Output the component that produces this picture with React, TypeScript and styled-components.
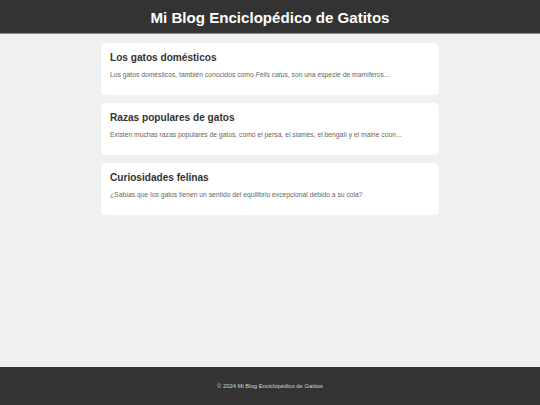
import React from 'react';
import styled, { createGlobalStyle } from 'styled-components';

const GlobalStyle = createGlobalStyle`
  html, body {
    margin: 0;
    padding: 0;
    background: #f0f0f0;
    font-family: "Liberation Sans", Arial, sans-serif;
  }
`;

const Page = styled.div`
  min-height: 100vh;
  display: flex;
  flex-direction: column;
`;

const Header = styled.header`
  background: #333333;
  height: 33px;
  border-bottom: 1px solid #8a8a8a;
  display: flex;
  align-items: center;
  justify-content: center;
`;

const Title = styled.h1`
  margin: 0;
  padding-top: 1px;
  color: #ffffff;
  font-size: 15.1px;
  font-weight: bold;
`;

const Main = styled.main`
  flex: 1;
  width: 338px;
  margin: 0 auto;
  padding-top: 9px;
  display: flex;
  flex-direction: column;
  gap: 8px;
`;

const Card = styled.article`
  background: #ffffff;
  border-radius: 5px;
  height: 52px;
  box-sizing: border-box;
  padding: 9px 9px 0;
`;

const CardTitle = styled.h2`
  margin: 0;
  font-size: 10.1px;
  line-height: 12px;
  color: #333333;
  font-weight: bold;
`;

const CardText = styled.p`
  margin: 6px 0 0;
  font-size: 6.75px;
  line-height: 10px;
  color: #666666;
`;

const Footer = styled.footer`
  background: #333333;
  height: 38px;
  display: flex;
  align-items: center;
  justify-content: center;
  color: #d8d8d8;
  font-size: 5.85px;
`;

const posts = [
  {
    title: 'Los gatos domésticos',
    text: (
      <>
        Los gatos domésticos, también conocidos como <em>Felis catus</em>, son una especie de mamíferos...
      </>
    ),
  },
  {
    title: 'Razas populares de gatos',
    text: <>Existen muchas razas populares de gatos, como el persa, el siamés, el bengalí y el maine coon...</>,
  },
  {
    title: 'Curiosidades felinas',
    text: <>¿Sabías que los gatos tienen un sentido del equilibrio excepcional debido a su cola?</>,
  },
];

export default function App() {
  return (
    <>
      <GlobalStyle />
      <Page>
        <Header>
          <Title>Mi Blog Enciclopédico de Gatitos</Title>
        </Header>
        <Main>
          {posts.map((p) => (
            <Card key={p.title}>
              <CardTitle>{p.title}</CardTitle>
              <CardText>{p.text}</CardText>
            </Card>
          ))}
        </Main>
        <Footer>© 2024 Mi Blog Enciclopédico de Gatitos</Footer>
      </Page>
    </>
  );
}
